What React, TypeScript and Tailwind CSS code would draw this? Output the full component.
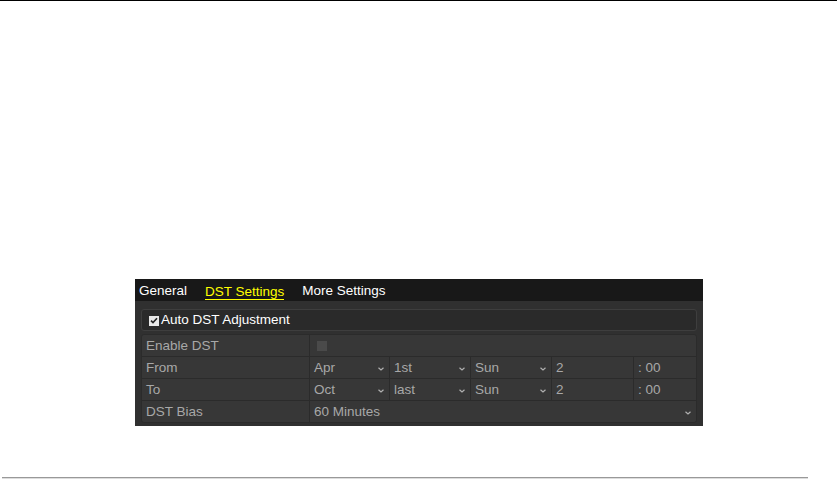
import React from 'react';

const Chevron = () => (
  <svg width="6" height="4" viewBox="0 0 6 4" className="shrink-0">
    <path d="M0.5 0.8 L3 3 L5.5 0.8" stroke="#b0b0b0" strokeWidth="1.2" fill="none" />
  </svg>
);

function Cell({ children, w, chevron, last }: { children?: React.ReactNode; w: string; chevron?: boolean; last?: boolean }) {
  return (
    <div className={`${w} h-full flex items-center justify-between pl-[4px] pr-[5px] pt-[2px] ${last ? '' : 'border-r border-[#2b2b2b]'}`}>
      <span>{children}</span>
      {chevron && <Chevron />}
    </div>
  );
}

export default function App() {
  return (
    <div className="w-[837px] h-[480px] bg-white border-t border-black flex flex-col" style={{ fontFamily: '"Liberation Sans", Arial, sans-serif' }}>
      <div className="ml-[135px] mt-[278px] w-[568px] h-[147px] bg-[#303030] flex flex-col">
        {/* tabs */}
        <div className="h-[22px] bg-[#181818] flex items-center pt-[3px] text-[13.5px] text-white">
          <span className="ml-[4px]">General</span>
          <span className="ml-[18px] mt-[1px] text-[#ffff00] border-b border-[#ffff00] leading-[15px]">DST Settings</span>
          <span className="ml-[18px]">More Settings</span>
        </div>
        <div className="flex-1 px-[6px] pt-[8px] pb-[4px] flex flex-col">
          <div className="h-[22px] rounded-[3px] border border-[#3e3e3e] bg-[#2a2a2a] flex items-center pl-[7px] pt-[1px] text-[13.5px] text-white">
            <span className="w-[10px] h-[10px] bg-[#e8e8e8] flex items-center justify-center mr-[2px]">
              <svg width="8" height="7" viewBox="0 0 8 7">
                <path d="M1 3.6 L3 5.6 L7 1.2" stroke="#222" strokeWidth="1.6" fill="none" />
              </svg>
            </span>
            Auto DST Adjustment
          </div>
          <div className="mt-[3px] rounded-[3px] border border-[#2b2b2b] bg-[#373737] text-[13.5px] text-[#a8a8a8] flex flex-col">
            <div className="h-[22px] flex border-b border-[#2b2b2b]">
              <Cell w="w-[168px]">Enable DST</Cell>
              <div className="flex-1 flex items-center pl-[7px]">
                <span className="w-[10px] h-[10px] bg-[#4a4a4a]" />
              </div>
            </div>
            <div className="h-[22px] flex border-b border-[#2b2b2b]">
              <Cell w="w-[168px]">From</Cell>
              <Cell w="w-[80px]" chevron>Apr</Cell>
              <Cell w="w-[81px]" chevron>1st</Cell>
              <Cell w="w-[81px]" chevron>Sun</Cell>
              <Cell w="w-[82px]">2</Cell>
              <Cell w="flex-1" last>: 00</Cell>
            </div>
            <div className="h-[22px] flex border-b border-[#2b2b2b]">
              <Cell w="w-[168px]">To</Cell>
              <Cell w="w-[80px]" chevron>Oct</Cell>
              <Cell w="w-[81px]" chevron>last</Cell>
              <Cell w="w-[81px]" chevron>Sun</Cell>
              <Cell w="w-[82px]">2</Cell>
              <Cell w="flex-1" last>: 00</Cell>
            </div>
            <div className="h-[21px] flex">
              <Cell w="w-[168px]">DST Bias</Cell>
              <Cell w="flex-1" chevron last>60 Minutes</Cell>
            </div>
          </div>
        </div>
      </div>
      <div className="mt-[51px] ml-[2px] w-[806px] h-[2px] bg-[#999999] border-b border-[#dddddd]" />
    </div>
  );
}
